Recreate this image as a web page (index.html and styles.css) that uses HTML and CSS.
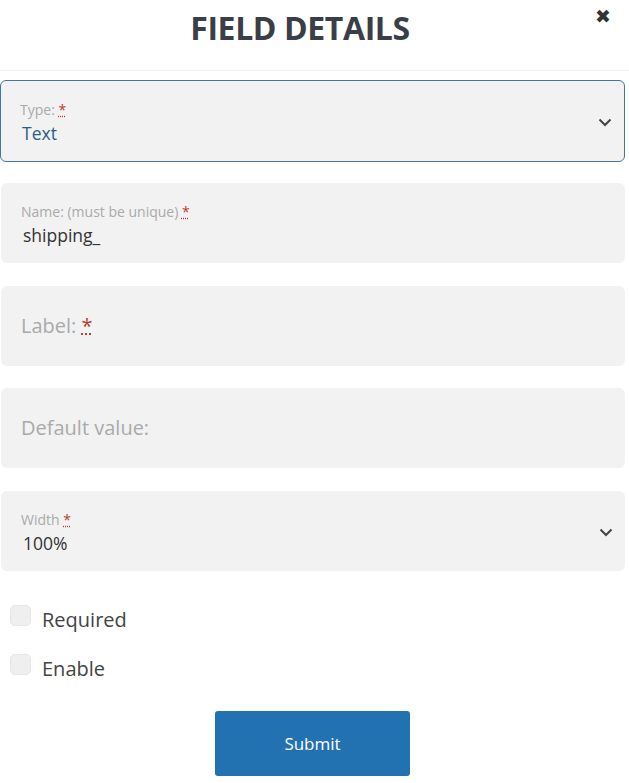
FILE: index.html
```html
<!DOCTYPE html>
<html>
<head>
<meta charset="utf-8">
<link rel="stylesheet" href="styles.css">
</head>
<body>
<div class="modal">
  <header class="header">
    <h1 class="title">FIELD DETAILS</h1>
    <span class="close">&#x2716;</span>
  </header>
  <form class="form">
    <div class="field field-active">
      <div class="field-body">
        <span class="lbl">Type: <abbr class="req" title="required">*</abbr></span>
        <span class="val val-blue">Text</span>
      </div>
      <svg class="chev" width="14" height="9" viewBox="0 0 14 9"><path d="M1.5 1.5 L7 7 L12.5 1.5" fill="none" stroke="#444" stroke-width="2"/></svg>
    </div>
    <div class="field">
      <div class="field-body">
        <span class="lbl">Name: (must be unique) <abbr class="req" title="required">*</abbr></span>
        <span class="val">shipping_</span>
      </div>
    </div>
    <div class="field">
      <div class="field-body">
        <span class="ph">Label: <abbr class="req" title="required">*</abbr></span>
      </div>
    </div>
    <div class="field">
      <div class="field-body">
        <span class="ph">Default value:</span>
      </div>
    </div>
    <div class="field">
      <div class="field-body">
        <span class="lbl">Width <abbr class="req" title="required">*</abbr></span>
        <span class="val">100%</span>
      </div>
      <svg class="chev" width="14" height="9" viewBox="0 0 14 9"><path d="M1.5 1.5 L7 7 L12.5 1.5" fill="none" stroke="#444" stroke-width="2"/></svg>
    </div>
    <label class="check"><span class="box"></span>Required</label>
    <label class="check"><span class="box"></span>Enable</label>
    <div class="actions">
      <button type="button" class="submit">Submit</button>
    </div>
  </form>
</div>
</body>
</html>
```
FILE: styles.css
```css
html, body {
  margin: 0;
  padding: 0;
  background: #fff;
}
body {
  font-family: "Open Sans", "Noto Sans", sans-serif;
  color: #444;
}
.modal {
  width: 629px;
}
.header {
  position: relative;
  height: 70px;
  border-bottom: 1px solid #f0f0f0;
  display: flex;
  justify-content: center;
  padding-right: 29px;
}
.title {
  margin: 6px 0 0;
  font-size: 32px;
  font-weight: 700;
  color: #3a3f47;
  letter-spacing: -0.4px;
  line-height: 44px;
}
.close {
  position: absolute;
  right: 18px;
  top: 3px;
  font-size: 19px;
  color: #333;
}
.form {
  padding: 9px 4px 0 0;
  display: flex;
  flex-direction: column;
}
.field {
  height: 80px;
  box-sizing: border-box;
  background: #f2f2f2;
  border-radius: 6px;
  margin: 0 0 22.6px 1px;
  display: flex;
  align-items: center;
  padding: 0 12px 0 20px;
}
.field-active {
  margin-left: 0;
  border: 1px solid #3d77a7;
  padding-left: 19px;
  height: 82px;
  margin-bottom: 21px;
}
.field-body {
  flex: 1;
  display: flex;
  flex-direction: column;
  padding-top: 4px;
}
.lbl {
  font-size: 14px;
  color: #aaa;
  line-height: 20px;
}
.val {
  font-size: 17.5px;
  color: #333;
  line-height: 26px;
  padding-left: 2px;
}
.val-blue {
  color: #2b5d88;
}
.ph {
  font-size: 20px;
  color: #aaa;
  line-height: 26px;
  margin-top: -4px;
}
.req {
  color: #c0392b;
  text-decoration: underline dotted #c0392b;
}
.chev {
  flex: none;
  margin-top: 3px;
}
.check {
  display: flex;
  align-items: center;
  font-size: 20px;
  color: #444;
  margin: 13px 0 0 10px;
  height: 26px;
}
.check + .check {
  margin-top: 23px;
}
.box {
  width: 21px;
  height: 21px;
  border-radius: 5px;
  background: #efefef;
  border: 1px solid #e6e6e6;
  box-sizing: border-box;
  margin-right: 11px;
  margin-top: -8px;
}
.actions {
  display: flex;
  justify-content: center;
  padding-top: 30px;
}
.submit {
  width: 195px;
  height: 65px;
  background: #2271b1;
  color: #fff;
  border: none;
  border-radius: 3px;
  font-family: "Open Sans", sans-serif;
  font-size: 17px;
}
```
